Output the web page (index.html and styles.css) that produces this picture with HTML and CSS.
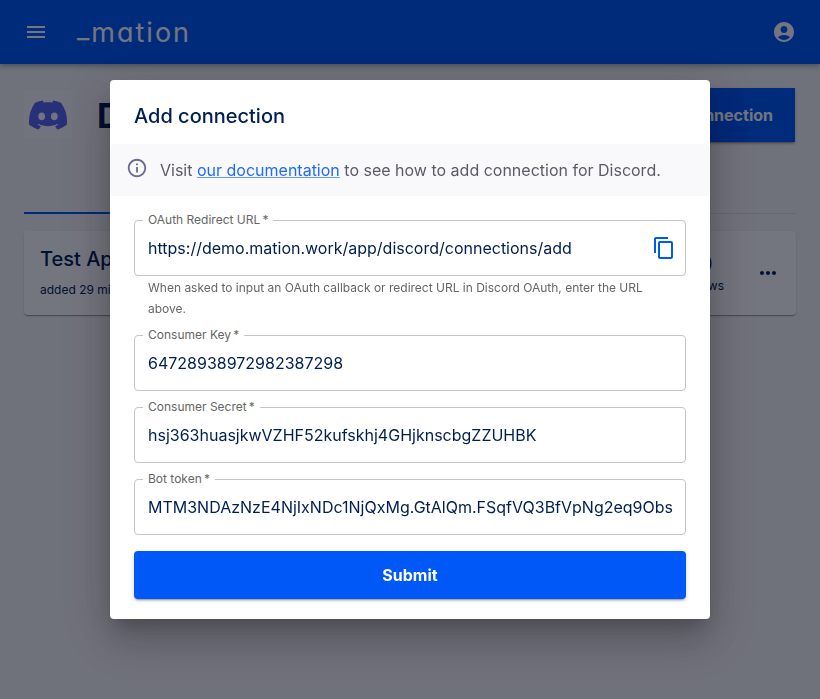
FILE: index.html
```html
<!DOCTYPE html>
<html lang="en">
<head>
  <meta charset="UTF-8">
  <title>Add connection</title>
  <link rel="stylesheet" href="styles.css">
</head>
<body>
  <header class="appbar">
    <svg class="icon" viewBox="0 0 24 24"><path d="M3 18h18v-2H3v2zm0-5h18v-2H3v2zm0-7v2h18V6H3z"/></svg>
    <span class="logo"><span class="logobar">_</span>mation</span>
    <svg class="icon account" viewBox="0 0 24 24"><path d="M12 2C6.48 2 2 6.48 2 12s4.48 10 10 10 10-4.48 10-10S17.52 2 12 2zm0 4c1.93 0 3.5 1.57 3.5 3.5S13.93 13 12 13s-3.5-1.57-3.5-3.5S10.07 6 12 6zm0 14c-2.03 0-4.43-.82-6.14-2.88C7.55 15.8 9.68 15 12 15s4.45.8 6.14 2.12C16.43 19.18 14.03 20 12 20z"/></svg>
  </header>

  <main class="page">
    <div class="appheader">
      <div class="appicon">
        <svg viewBox="0 0 24 24"><path d="M20.317 4.3698a19.7913 19.7913 0 00-4.8851-1.5152.0741.0741 0 00-.0785.0371c-.211.3753-.4447.8648-.6083 1.2495-1.8447-.2762-3.68-.2762-5.4868 0-.1636-.3933-.4058-.8742-.6177-1.2495a.077.077 0 00-.0785-.037 19.7363 19.7363 0 00-4.8852 1.515.0699.0699 0 00-.0321.0277C.5334 9.0458-.319 13.5799.0992 18.0578a.0824.0824 0 00.0312.0561c2.0528 1.5076 4.0413 2.4228 5.9929 3.0294a.0777.0777 0 00.0842-.0276c.4616-.6304.8731-1.2952 1.226-1.9942a.076.076 0 00-.0416-.1057c-.6528-.2476-1.2743-.5495-1.8722-.8923a.077.077 0 01-.0076-.1277c.1258-.0943.2517-.1923.3718-.2914a.0743.0743 0 01.0776-.0105c3.9278 1.7933 8.18 1.7933 12.0614 0a.0739.0739 0 01.0785.0095c.1202.099.246.1981.3728.2924a.077.077 0 01-.0066.1276 12.2986 12.2986 0 01-1.873.8914.0766.0766 0 00-.0407.1067c.3604.698.7719 1.3628 1.225 1.9932a.076.076 0 00.0842.0286c1.961-.6067 3.9495-1.5219 6.0023-3.0294a.077.077 0 00.0313-.0552c.5004-5.177-.8382-9.6739-3.5485-13.6604a.061.061 0 00-.0312-.0286zM8.02 15.3312c-1.1825 0-2.1569-1.0857-2.1569-2.419 0-1.3332.9555-2.4189 2.157-2.4189 1.2108 0 2.1757 1.0952 2.1568 2.419 0 1.3332-.9555 2.4189-2.1569 2.4189zm7.9748 0c-1.1825 0-2.1569-1.0857-2.1569-2.419 0-1.3332.9554-2.4189 2.1569-2.4189 1.2108 0 2.1757 1.0952 2.1568 2.419 0 1.3332-.946 2.4189-2.1568 2.4189Z"/></svg>
      </div>
      <h1 class="appname">Discord</h1>
      <button class="addbtn" type="button">Add connection</button>
    </div>

    <div class="tabs"><span class="tab"></span></div>

    <div class="card">
      <div class="cardinfo">
        <div class="cardtitle">Test Application</div>
        <div class="cardsub">added 29 minutes ago</div>
      </div>
      <div class="cardstats">
        <div class="cardcount">(0)</div>
        <div class="cardsub">flows</div>
      </div>
      <svg class="dots" viewBox="0 0 24 24"><path d="M6 10c-1.1 0-2 .9-2 2s.9 2 2 2 2-.9 2-2-.9-2-2-2zm12 0c-1.1 0-2 .9-2 2s.9 2 2 2 2-.9 2-2-.9-2-2-2zm-6 0c-1.1 0-2 .9-2 2s.9 2 2 2 2-.9 2-2-.9-2-2-2z"/></svg>
    </div>
  </main>

  <div class="backdrop">
    <div class="dialog">
      <h2 class="dialogtitle">Add connection</h2>

      <div class="alert">
        <svg class="alerticon" viewBox="0 0 24 24"><path d="M11 7h2v2h-2zm0 4h2v6h-2zm1-9C6.48 2 2 6.48 2 12s4.48 10 10 10 10-4.48 10-10S17.52 2 12 2zm0 18c-4.41 0-8-3.59-8-8s3.59-8 8-8 8 3.59 8 8-3.59 8-8 8z"/></svg>
        <div>Visit <a href="#">our documentation</a> to see how to add connection for Discord.</div>
      </div>

      <form class="form" onsubmit="return false;">
        <div>
          <div class="field">
            <label class="fieldlabel">OAuth Redirect URL&thinsp;*</label>
            <div class="fieldvalue">https://demo.mation.work/app/discord/connections/add</div>
            <svg class="copyicon" viewBox="0 0 24 24"><path d="M16 1H4c-1.1 0-2 .9-2 2v14h2V3h12V1zm3 4H8c-1.1 0-2 .9-2 2v14c0 1.1.9 2 2 2h11c1.1 0 2-.9 2-2V7c0-1.1-.9-2-2-2zm0 16H8V7h11v14z"/></svg>
          </div>
          <p class="helper">When asked to input an OAuth callback or redirect URL in Discord OAuth, enter the URL above.</p>
        </div>

        <div class="field">
          <label class="fieldlabel">Consumer Key&thinsp;*</label>
          <div class="fieldvalue">64728938972982387298</div>
        </div>

        <div class="field">
          <label class="fieldlabel">Consumer Secret&thinsp;*</label>
          <div class="fieldvalue">hsj363huasjkwVZHF52kufskhj4GHjknscbgZZUHBK</div>
        </div>

        <div class="field">
          <label class="fieldlabel">Bot token&thinsp;*</label>
          <div class="fieldvalue">MTM3NDAzNzE4NjIxNDc1NjQxMg.GtAlQm.FSqfVQ3BfVpNg2eq9Obs</div>
        </div>

        <button class="submit" type="submit">Submit</button>
      </form>
    </div>
  </div>
</body>
</html>
```

FILE: styles.css
```css
* {
  box-sizing: border-box;
}

html, body {
  height: 100%;
}

body {
  margin: 0;
  font-family: Inter, "Liberation Sans", sans-serif;
  background: #f7f7f7;
  color: #001f52;
  overflow: hidden;
}

.appbar {
  display: flex;
  align-items: center;
  height: 64px;
  padding: 0 24px;
  background: #0059f7;
  color: #fff;
  box-shadow: 0 2px 4px -1px rgba(0,0,0,0.2), 0 4px 5px rgba(0,0,0,0.14);
}

.icon {
  width: 24px;
  height: 24px;
  fill: #fff;
}

.logo {
  margin-left: 29px;
  font-size: 27px;
  font-weight: 400;
  letter-spacing: 2px;
  line-height: 30px;
  margin-bottom: 2px;
  font-feature-settings: "cv11";
}

.logobar {
  vertical-align: 4px;
}

.account {
  margin-left: auto;
}

.page {
  padding: 24px;
}

.appheader {
  display: flex;
  align-items: center;
  height: 54px;
}

.appicon {
  display: flex;
  align-items: center;
  justify-content: center;
  width: 48px;
  height: 48px;
  margin-right: 25px;
  background: #fbfbfb;
}

.appicon svg {
  width: 38px;
  height: 38px;
  fill: #5865f2;
}

.appname {
  margin: 0;
  font-size: 34px;
  font-weight: 700;
}

.addbtn {
  margin-left: auto;
  margin-right: 1px;
  height: 54px;
  padding: 0 22px;
  border: 0;
  background: #0059f7;
  color: #fff;
  font: 700 16px Inter, sans-serif;
  box-shadow: 0 3px 1px -2px rgba(0,0,0,0.2), 0 2px 2px rgba(0,0,0,0.14), 0 1px 5px rgba(0,0,0,0.12);
}

.tabs {
  height: 72px;
  border-bottom: 1px solid #e0e0e0;
  display: flex;
  align-items: flex-end;
}

.tab {
  width: 160px;
  height: 2px;
  margin-bottom: -1px;
  background: #0059f7;
}

.card {
  display: flex;
  align-items: center;
  height: 84px;
  margin-top: 17px;
  padding: 0 16px;
  border-radius: 4px;
  background: #fff;
  box-shadow: 0 2px 1px -1px rgba(0,0,0,0.2), 0 1px 1px rgba(0,0,0,0.14), 0 1px 3px rgba(0,0,0,0.12);
}

.cardinfo {
  margin-bottom: 2px;
}

.cardtitle {
  font-size: 20px;
  font-weight: 500;
  margin-bottom: 11px;
}

.cardsub {
  font-size: 12px;
}

.cardstats {
  margin-left: auto;
  margin-right: 32px;
  text-align: right;
}

.cardcount {
  font-size: 16px;
  margin: 0 11px 5px 0;
}

.dots {
  width: 24px;
  height: 24px;
  fill: #001f52;
}

.backdrop {
  position: fixed;
  inset: 0;
  display: flex;
  justify-content: center;
  align-items: flex-start;
  padding-top: 80px;
  background: rgba(0,6,22,0.55);
}

.dialog {
  width: 600px;
  height: 539px;
  border-radius: 4px;
  background: #fff;
  box-shadow: 0 11px 15px -7px rgba(0,0,0,0.2), 0 24px 38px 3px rgba(0,0,0,0.14), 0 9px 46px 8px rgba(0,0,0,0.12);
}

.dialogtitle {
  margin: 0;
  padding: 24px 24px 16px;
  height: 64px;
  font-size: 20px;
  font-weight: 500;
  line-height: 24px;
}

.alert {
  display: flex;
  align-items: center;
  height: 52px;
  padding: 0 16px;
  border-radius: 4px;
  background: #f9f9fb;
  color: #5b5b66;
  font-size: 16px;
}

.alert a {
  color: #1f6bf8;
  text-decoration-color: rgba(0,89,247,0.6);
}

.alerticon {
  width: 22px;
  height: 22px;
  margin: -4px 12px 0 0;
  fill: #6d6a8f;
}

.form {
  display: flex;
  flex-direction: column;
  gap: 16px;
  padding: 24px 24px 0;
}

.field {
  position: relative;
  display: flex;
  align-items: center;
  justify-content: space-between;
  height: 56px;
  padding: 0 9px 0 13px;
  border: 1px solid #c4c4c4;
  border-radius: 4px;
}

.fieldlabel {
  position: absolute;
  top: -9px;
  left: 8px;
  padding: 0 5px;
  background: #fff;
  font-size: 12px;
  line-height: 16px;
  color: #666;
}

.fieldvalue {
  min-width: 0;
  overflow: hidden;
  white-space: nowrap;
  font-size: 16px;
  line-height: 24px;
  color: #001f52;
}

.copyicon {
  flex: none;
  width: 24px;
  height: 24px;
  fill: #0059f7;
}

.helper {
  margin: 1px 14px 0;
  font-size: 12px;
  line-height: 21px;
  color: #666;
}

.submit {
  height: 48px;
  border: 0;
  border-radius: 4px;
  background: #0059f7;
  color: #fff;
  font: 700 16px Inter, sans-serif;
  box-shadow: 0 3px 1px -2px rgba(0,0,0,0.2), 0 2px 2px rgba(0,0,0,0.14), 0 1px 5px rgba(0,0,0,0.12);
}
```
